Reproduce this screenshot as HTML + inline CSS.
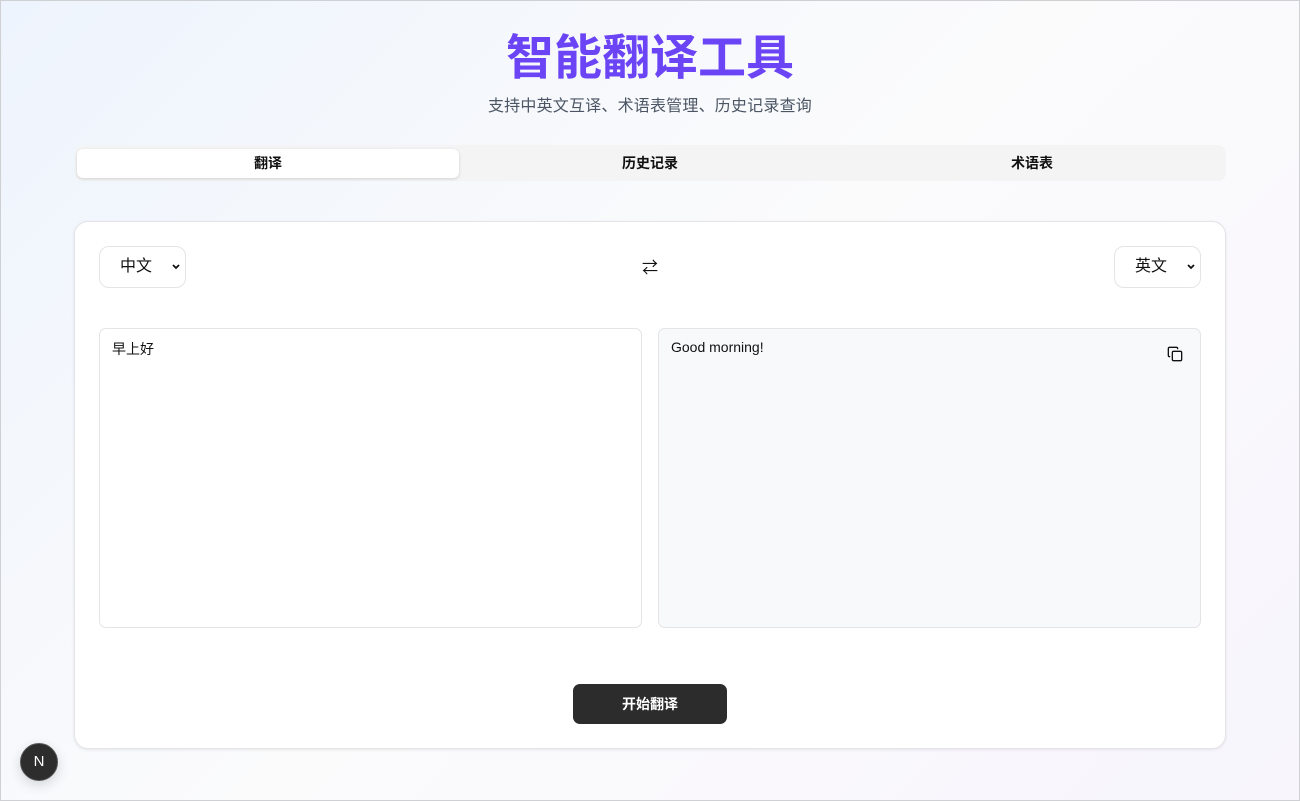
<!DOCTYPE html>
<html><head><meta charset="utf-8"><style>
*{box-sizing:border-box;margin:0;padding:0}
body{width:1300px;height:801px;overflow:hidden;font-family:"Liberation Sans","Noto Sans CJK SC",sans-serif;background:linear-gradient(135deg,#eef4fd 0%,#fbfbfc 50%,#f8f5fd 100%);position:relative;color:#111}
.frame{position:absolute;left:0;top:0;width:1300px;height:801px;border:1px solid #cfd0d3;pointer-events:none}
h1{position:absolute;top:29px;left:0;width:1300px;text-align:center;font-size:48px;font-weight:700;color:#6b45f5;line-height:60px}
.sub{position:absolute;top:92px;width:1300px;text-align:center;font-size:16px;color:#4b5563;letter-spacing:.2px}
.tabs{position:absolute;left:75px;top:145px;width:1151px;height:36px;background:#f4f4f5;border-radius:8px}
.tab{position:absolute;top:4px;height:29px;width:382px;text-align:center;line-height:29px;font-size:14px;font-weight:700;color:#111}
.tab.a{background:#fff;border-radius:6px;box-shadow:0 1px 3px rgba(0,0,0,.15)}
.card{position:absolute;left:74px;top:221px;width:1152px;height:528px;background:#fff;border:1px solid #e4e4e7;border-radius:14px;box-shadow:0 1px 3px rgba(0,0,0,.08)}
.sel{position:absolute;top:24px;width:87px;height:42px;border:1px solid #e4e4e7;border-radius:10px;background:#fff;font-size:16px;line-height:40px;padding-left:20px}
.sel svg{position:absolute;right:4px;top:16px}
.box{position:absolute;top:106px;width:543px;height:300px;border:1px solid #e4e4e7;border-radius:7px;padding:10px 12px;font-size:14px}
.btn{position:absolute;left:498px;top:462px;width:154px;height:40px;background:#2c2c2c;color:#fff;border-radius:7px;text-align:center;line-height:40px;font-size:14px;font-weight:700}
.n{position:absolute;left:20px;top:743px;width:38px;height:38px;border-radius:50%;background:#2d2d2d;border:1px solid #555;color:#fff;text-align:center;line-height:36px;font-size:15px;box-shadow:0 4px 12px rgba(0,0,0,.15)}
</style></head><body>
<div class="frame"></div>
<h1>智能翻译工具</h1>
<div class="sub">支持中英文互译、术语表管理、历史记录查询</div>
<div class="tabs">
<div class="tab a" style="left:2px">翻译</div>
<div class="tab" style="left:384px">历史记录</div>
<div class="tab" style="left:766px">术语表</div>
</div>
<div class="card">
<div class="sel" style="left:24px">中文<svg width="10" height="8" viewBox="0 0 10 8"><path d="M2 2l3 3 3-3" stroke="#111" stroke-width="1.8" fill="none"/></svg></div>
<div style="position:absolute;left:567px;top:32px;font-size:16px">⇄</div>
<div class="sel" style="left:1039px">英文<svg width="10" height="8" viewBox="0 0 10 8"><path d="M2 2l3 3 3-3" stroke="#111" stroke-width="1.8" fill="none"/></svg></div>
<div class="box" style="left:24px;background:#fff">早上好</div>
<div class="box" style="left:583px;background:#f8f9fb">Good morning!
<svg style="position:absolute;right:17px;top:17px" width="16" height="16" viewBox="0 0 24 24" fill="none" stroke="#111" stroke-width="2" stroke-linecap="round" stroke-linejoin="round"><rect x="8" y="8" width="14" height="14" rx="2"/><path d="M4 16c-1.1 0-2-.9-2-2V4c0-1.1.9-2 2-2h10c1.1 0 2 .9 2 2"/></svg></div>
<div class="btn">开始翻译</div>
</div>
<div class="n">N</div>
</body></html>
